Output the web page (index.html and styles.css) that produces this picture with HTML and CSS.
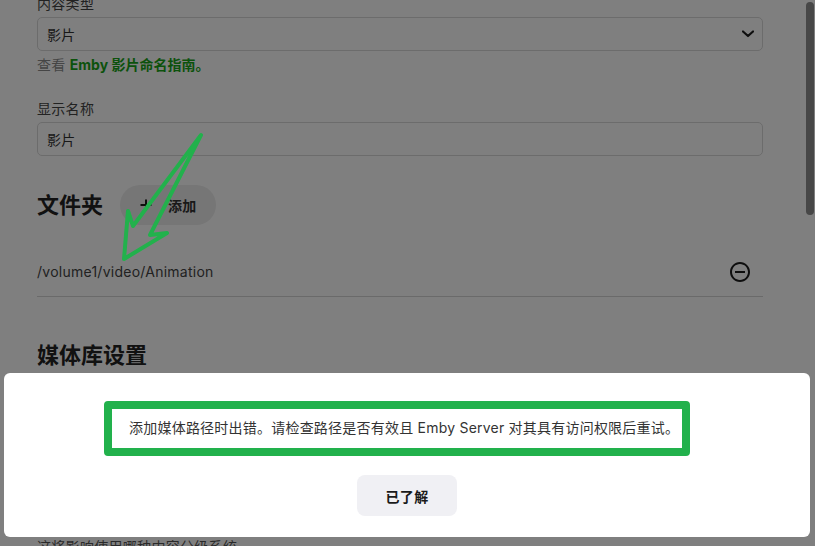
FILE: index.html
```html
<!DOCTYPE html>
<html lang="zh-CN">
<head>
<meta charset="utf-8">
<title>媒体库</title>
<link rel="stylesheet" href="styles.css">
</head>
<body>
<div class="page">
  <div class="field">
    <label class="field-label">内容类型</label>
    <div class="select">
      <span>影片</span>
      <svg class="chevron" width="12" height="8" viewBox="0 0 12 8"><polyline points="1,1.5 6,6 11,1.5" fill="none" stroke="#1c1c1c" stroke-width="2.2" stroke-linecap="round" stroke-linejoin="round"/></svg>
    </div>
    <p class="field-help">查看 <a class="link">Emby 影片命名指南。</a></p>
  </div>
  <div class="field">
    <label class="field-label">显示名称</label>
    <div class="input">影片</div>
  </div>

  <section class="folders">
    <div class="section-head">
      <h2 class="section-title">文件夹</h2>
      <button class="btn-add">
        <svg width="12" height="12" viewBox="0 0 12 12"><path d="M6 0.5v11M0.5 6h11" stroke="#1c1c1c" stroke-width="2"/></svg>
        <span>添加</span>
      </button>
    </div>
    <div class="folder-row">
      <span class="folder-path">/volume1/video/Animation</span>
      <button class="icon-btn">
        <svg width="24" height="24" viewBox="0 0 24 24"><path fill="#1c1c1c" d="M7 11v2h10v-2H7zm5-9C6.480 2 2 6.48 2 12s4.48 10 10 10 10-4.48 10-10S17.52 2 12 2zm0 18c-4.41 0-8-3.590-8-8s3.59-8 8-8 8 3.59 8 8-3.59 8-8 8z"/></svg>
      </button>
    </div>
  </section>

  <section class="library-settings">
    <h2 class="section-title settings-title">媒体库设置</h2>
    <div class="field field-first">
      <label class="field-label">首选元数据下载语言</label>
      <div class="select"><span>中文（简体）</span></div>
    </div>
    <div class="field">
      <label class="field-label">国家/地区</label>
      <div class="select"><span>中国</span></div>
    </div>
    <p class="field-help field-help-far">这将影响使用哪种内容分级系统</p>
  </section>
</div>

<div class="scroll-thumb"></div>
<div class="overlay"></div>

<div class="dialog">
  <div class="dialog-message">添加媒体路径时出错。请检查路径是否有效且 Emby Server 对其具有访问权限后重试。</div>
  <button class="btn-ok">已了解</button>
</div>

<svg class="annotation" width="815" height="546" viewBox="0 0 815 546">
  <polygon points="201,135 133,226 128,211 124,259 167,233 150,235" fill="none" stroke="#22b14c" stroke-width="4" stroke-linejoin="round"/>
</svg>
</body>
</html>
```

FILE: styles.css
```css
html, body {
  margin: 0;
  height: 100%;
  overflow: hidden;
  background: #fff;
}

body {
  font-family: Inter, "Noto Sans CJK SC", sans-serif;
  font-size: 14px;
  letter-spacing: 0.3px;
  color: #333;
}

.page {
  width: 726px;
  margin: -6px 0 0 37px;
  display: flex;
  flex-direction: column;
}

.field + .field {
  margin-top: 24px;
}

.field-label {
  display: block;
  line-height: 20px;
  margin-bottom: 3px;
  color: #444;
}

.select,
.input {
  height: 34px;
  box-sizing: border-box;
  border: 1px solid #d8d8d8;
  border-radius: 5px;
  display: flex;
  align-items: center;
  justify-content: space-between;
  padding: 0 8px 0 9px;
  color: #333;
}

.field-help {
  margin: 4px 0 0;
  line-height: 20px;
  color: #8a8a8a;
}

.link {
  color: #19a419;
  font-weight: 700;
  letter-spacing: 0;
}

.section-head {
  display: flex;
  align-items: center;
  gap: 17px;
  margin-top: 29px;
}

.section-title {
  margin: 0;
  font-size: 22px;
  line-height: 30px;
  font-weight: 700;
  letter-spacing: 0;
  color: #222;
}

.btn-add {
  height: 40px;
  border: 0;
  border-radius: 20px;
  background: #ececec;
  padding: 0 19px 0 20px;
  display: flex;
  align-items: center;
  gap: 16px;
  font: inherit;
  letter-spacing: inherit;
  font-weight: 600;
  color: #333;
}

.folder-row {
  display: flex;
  align-items: center;
  justify-content: space-between;
  padding: 12px 0;
  margin-top: 23px;
  border-bottom: 1px solid #d4d4d4;
  line-height: 20px;
}

.folder-path {
  color: #444;
  letter-spacing: 0.25px;
}

.icon-btn {
  border: 0;
  background: none;
  padding: 0;
  margin-right: 11px;
  width: 24px;
  height: 24px;
  display: flex;
}

.settings-title {
  margin-top: 43px;
}

.field-first {
  margin-top: 20px;
}

.field-help-far {
  margin-top: 9px;
  color: #555;
}

.scroll-thumb {
  position: fixed;
  right: 1px;
  top: 2px;
  width: 8px;
  height: 213px;
  border-radius: 4px;
  background: #8e8e8e;
}

.overlay {
  position: fixed;
  inset: 0;
  background: rgba(0, 0, 0, 0.5);
}

.dialog {
  position: fixed;
  left: 4px;
  top: 373px;
  width: 806px;
  height: 164px;
  box-sizing: border-box;
  background: #fff;
  border-radius: 6px;
  padding-top: 28px;
  display: flex;
  flex-direction: column;
  align-items: center;
}

.dialog-message {
  align-self: flex-start;
  margin-left: 100px;
  border: 8px solid #22b14c;
  border-radius: 4px;
  padding: 9px 3px 10px 17px;
  font-size: 14px;
  line-height: 20px;
  letter-spacing: 0.22px;
  white-space: nowrap;
  color: #333;
}

.btn-ok {
  margin-top: 19px;
  height: 41px;
  padding: 0 29px;
  border: 0;
  border-radius: 8px;
  background: #f0f0f4;
  font: inherit;
  letter-spacing: inherit;
  font-size: 14px;
  font-weight: 700;
  color: #1a1a1a;
}

.annotation {
  position: fixed;
  left: 0;
  top: 0;
  pointer-events: none;
}
```
